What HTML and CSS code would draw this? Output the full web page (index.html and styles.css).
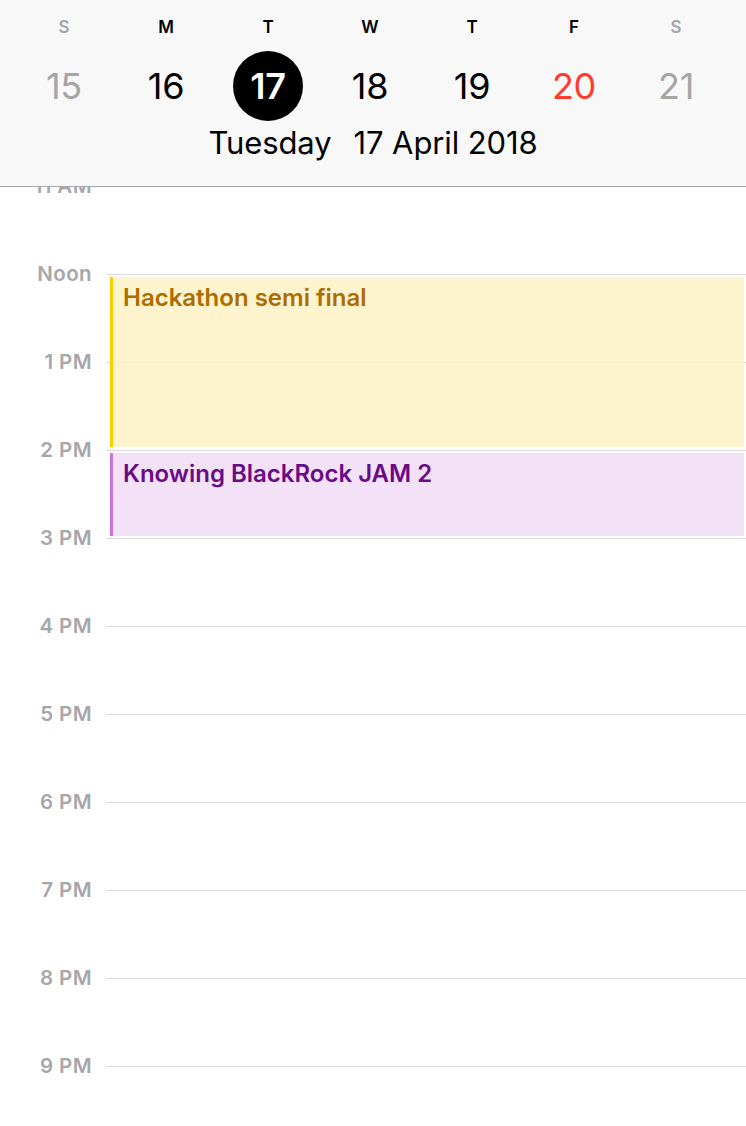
FILE: index.html
```html
<!DOCTYPE html>
<html lang="en">
<head>
<meta charset="utf-8">
<title>Calendar Day</title>
<link rel="stylesheet" href="styles.css">
</head>
<body>
<header class="week-header">
  <div class="week-grid">
    <div class="day weekend"><span class="dow">S</span><span class="num">15</span></div>
    <div class="day"><span class="dow">M</span><span class="num">16</span></div>
    <div class="day selected"><span class="dow">T</span><span class="num">17</span></div>
    <div class="day"><span class="dow">W</span><span class="num">18</span></div>
    <div class="day"><span class="dow">T</span><span class="num">19</span></div>
    <div class="day today"><span class="dow">F</span><span class="num">20</span></div>
    <div class="day weekend"><span class="dow">S</span><span class="num">21</span></div>
  </div>
  <div class="full-date"><span>Tuesday</span><span>17 April 2018</span></div>
</header>
<main class="scroller">
  <div class="timeline">
    <div class="hour"><span class="label">11 AM</span><span class="rule"></span></div>
    <div class="hour"><span class="label">Noon</span><span class="rule"></span></div>
    <div class="hour"><span class="label">1 PM</span><span class="rule"></span></div>
    <div class="hour"><span class="label">2 PM</span><span class="rule"></span></div>
    <div class="hour"><span class="label">3 PM</span><span class="rule"></span></div>
    <div class="hour"><span class="label">4 PM</span><span class="rule"></span></div>
    <div class="hour"><span class="label">5 PM</span><span class="rule"></span></div>
    <div class="hour"><span class="label">6 PM</span><span class="rule"></span></div>
    <div class="hour"><span class="label">7 PM</span><span class="rule"></span></div>
    <div class="hour"><span class="label">8 PM</span><span class="rule"></span></div>
    <div class="hour"><span class="label">9 PM</span><span class="rule"></span></div>
    <div class="event event-yellow"><span class="title">Hackathon semi final</span></div>
    <div class="event event-purple"><span class="title">Knowing BlackRock JAM 2</span></div>
  </div>
</main>
</body>
</html>
```

FILE: styles.css
```css
* { box-sizing: border-box; }
html, body {
  margin: 0;
  padding: 0;
  background: #ffffff;
  font-family: Inter, "Noto Sans", "Liberation Sans", sans-serif;
  width: 746px;
  height: 1126px;
  overflow: hidden;
}
.week-header {
  height: 187px;
  background: #f8f8f8;
  border-bottom: 1px solid #a9a9a9;
  position: relative;
  z-index: 2;
}
.week-grid {
  display: grid;
  grid-template-columns: repeat(7, 102px);
  padding-left: 13px;
  padding-top: 16px;
}
.day {
  display: flex;
  flex-direction: column;
  align-items: center;
  color: #000;
}
.dow {
  font-size: 17px;
  font-weight: 600;
  line-height: 22px;
  height: 22px;
}
.num {
  margin-top: 13px;
  width: 70px;
  height: 70px;
  border-radius: 50%;
  display: flex;
  align-items: center;
  justify-content: center;
  font-size: 36px;
  font-weight: 400;
  letter-spacing: -0.3px;
}
.weekend .dow, .weekend .num { color: #a5a5a5; }
.today .num { color: #ff3b30; }
.selected .num {
  background: #000;
  color: #fff;
  font-weight: 600;
}
.full-date {
  display: flex;
  justify-content: center;
  gap: 22px;
  font-size: 31px;
  line-height: 36px;
  color: #000;
  margin-top: 4px;
  letter-spacing: -0.1px;
}
.scroller {
  height: 939px;
  overflow: hidden;
}
.timeline {
  position: relative;
  margin-top: -1px;
}
.hour {
  display: flex;
  height: 88px;
}
.label {
  width: 92px;
  text-align: right;
  font-size: 20.5px;
  font-weight: 600;
  color: #a7a7ab;
  line-height: 24px;
  height: 24px;
  margin-top: -12px;
  letter-spacing: 0.4px;
}
.rule {
  flex: 1;
  margin-left: 14px;
  border-top: 1px solid #dcdcdc;
  height: 0;
}
.event {
  position: absolute;
  left: 110px;
  right: 2px;
  padding: 7px 0 0 10px;
}
.title {
  font-size: 24px;
  font-weight: 600;
  line-height: 28px;
  display: block;
}
.event-yellow {
  top: 91px;
  height: 170px;
  background: rgba(252, 240, 192, 0.8);
  border-left: 3px solid #ffcc00;
}
.event-yellow .title { color: #ad6d00; }
.event-purple {
  top: 267px;
  height: 83px;
  background: rgba(242, 222, 247, 0.92);
  border-left: 3px solid #cc73e1;
}
.event-purple .title { color: #6a0b86; }
```
